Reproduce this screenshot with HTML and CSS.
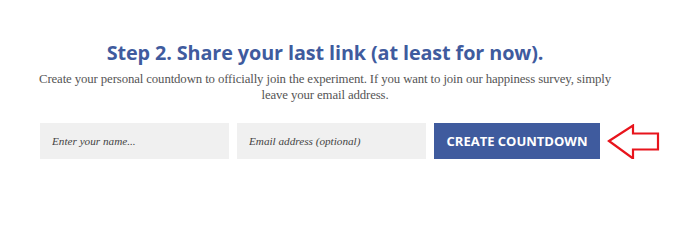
FILE: index.html
```html
<!DOCTYPE html>
<html>
<head>
<meta charset="utf-8">
<link rel="stylesheet" href="styles.css">
</head>
<body>
<div class="wrap">
  <h2 class="title">Step 2. Share your last link (at least for now).</h2>
  <p class="lead">Create your personal countdown to officially join the experiment. If you want to join our happiness survey, simply<br>leave your email address.</p>
  <form class="form">
    <input class="field field-name" type="text" placeholder="Enter your name...">
    <input class="field field-email" type="text" placeholder="Email address (optional)">
    <button class="btn" type="button">CREATE COUNTDOWN</button>
    <svg class="arrow" width="56" height="38" viewBox="0 0 56 38">
      <path d="M2 17 L26 1.5 L26 9.5 L51 9.5 L51 25.5 L26 25.5 L26 34.5 Z" fill="none" stroke="#e8141c" stroke-width="2.2" stroke-linejoin="miter"/>
    </svg>
  </form>
</div>
</body>
</html>
```
FILE: styles.css
```css
html, body {
  margin: 0;
  padding: 0;
  background: #fff;
}
.wrap {
  width: 570px;
  padding: 40px 0 0 40px;
  text-align: center;
}
.title {
  margin: 0;
  font-family: "Open Sans", sans-serif;
  font-weight: 700;
  font-size: 19.8px;
  line-height: 26px;
  color: #3f5b9e;
  letter-spacing: -0.1px;
}
.lead {
  margin: 5px -20px 0;
  font-family: "Liberation Serif", serif;
  font-size: 12.8px;
  line-height: 16px;
  color: #555;
  white-space: nowrap;
  letter-spacing: -0.12px;
}
.form {
  position: relative;
  display: flex;
  gap: 8px;
  margin-top: 20px;
}
.field {
  width: 189px;
  height: 36px;
  box-sizing: border-box;
  border: 0;
  background: #f0f0f0;
  padding: 0 12px;
  font-family: "Liberation Serif", serif;
  font-style: italic;
  font-size: 11.2px;
  color: #444;
  outline: none;
}
.field::placeholder {
  color: #444;
}
.btn {
  width: 166px;
  height: 36px;
  border: 0;
  background: #3f5b9e;
  color: #fff;
  font-family: "Open Sans", sans-serif;
  font-weight: 700;
  font-size: 13px;
  padding: 0;
}
.arrow {
  position: absolute;
  left: 567px;
  top: 1px;
}
```
